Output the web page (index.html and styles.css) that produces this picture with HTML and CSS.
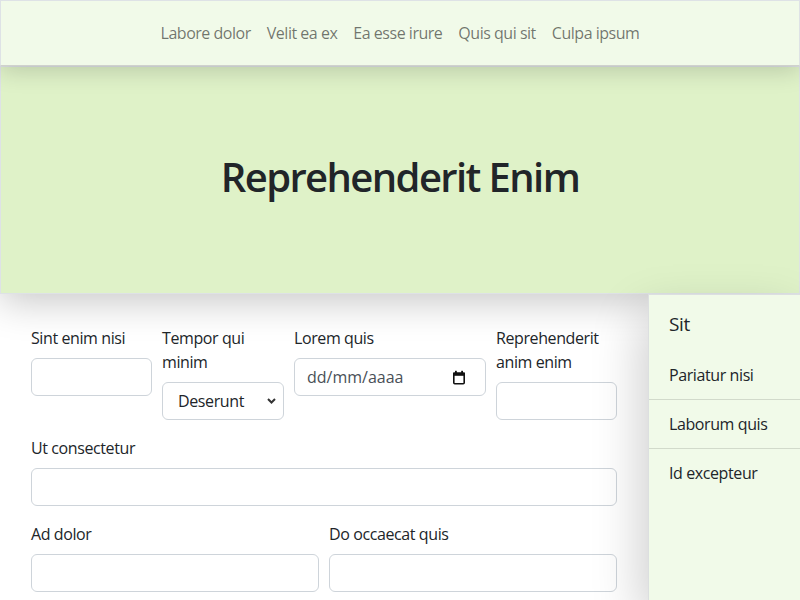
FILE: index.html
```html
<!DOCTYPE html>
<html lang="es">
<head>
<meta charset="utf-8">
<title>Reprehenderit Enim</title>
<link rel="stylesheet" href="styles.css">
</head>
<body>
<nav class="topnav">
  <ul class="nav-links">
    <li><a href="#">Labore dolor</a></li>
    <li><a href="#">Velit ea ex</a></li>
    <li><a href="#">Ea esse irure</a></li>
    <li><a href="#">Quis qui sit</a></li>
    <li><a href="#">Culpa ipsum</a></li>
  </ul>
</nav>
<header class="hero">
  <h1 class="hero-title">Reprehenderit Enim</h1>
</header>
<div class="main">
  <section class="content">
    <form class="form">
      <div class="row row-4">
        <div class="field">
          <label class="label" for="f1">Sint enim nisi</label>
          <input class="control" id="f1" type="text">
        </div>
        <div class="field">
          <label class="label" for="f2">Tempor qui minim</label>
          <select class="control select" id="f2">
            <option>Deserunt</option>
          </select>
        </div>
        <div class="field">
          <label class="label" for="f3">Lorem quis</label>
          <div class="control date-field">
            <input class="date-input" id="f3" type="text" value="dd/mm/aaaa">
            <svg class="cal-icon" width="14" height="15" viewBox="0 0 14 15" aria-hidden="true">
              <rect x="1.8" y="3.3" width="10.4" height="10.4" rx="1" fill="none" stroke="#111" stroke-width="1.6"/>
              <rect x="1" y="2.5" width="12" height="3.3" fill="#111"/>
              <rect x="3" y="0.8" width="1.8" height="3" fill="#111"/>
              <rect x="9.2" y="0.8" width="1.8" height="3" fill="#111"/>
            </svg>
          </div>
        </div>
        <div class="field">
          <label class="label" for="f4">Reprehenderit anim enim</label>
          <input class="control" id="f4" type="text">
        </div>
      </div>
      <div class="row row-1">
        <div class="field">
          <label class="label" for="f5">Ut consectetur</label>
          <input class="control" id="f5" type="text">
        </div>
      </div>
      <div class="row row-2">
        <div class="field">
          <label class="label" for="f6">Ad dolor</label>
          <input class="control" id="f6" type="text">
        </div>
        <div class="field">
          <label class="label" for="f7">Do occaecat quis</label>
          <input class="control" id="f7" type="text">
        </div>
      </div>
    </form>
  </section>
  <aside class="sidebar">
    <h2 class="sidebar-title">Sit</h2>
    <ul class="side-list">
      <li class="side-item">Pariatur nisi</li>
      <li class="side-item">Laborum quis</li>
      <li class="side-item">Id excepteur</li>
    </ul>
  </aside>
</div>
</body>
</html>
```
FILE: styles.css
```css
* { box-sizing: border-box; }

html, body {
  margin: 0;
  padding: 0;
}

body {
  font-family: "Open Sans", "Noto Sans", "DejaVu Sans", sans-serif;
  font-size: 16px;
  line-height: 1.5;
  color: #212529;
  background: #ffffff;
  letter-spacing: -0.025em;
}

/* ---------- top navigation ---------- */
.topnav {
  position: sticky;
  top: 0;
  z-index: 2;
  background: #f1fae9;
  border: 1px solid #dee2e6;
  border-bottom-color: #cfd2cc;
  box-shadow: 0 4px 24px rgba(0, 0, 0, 0.18);
}

.nav-links {
  list-style: none;
  margin: 0;
  padding: 20px 0;
  display: flex;
  justify-content: center;
}

.nav-links a {
  display: block;
  padding: 0 8px;
  line-height: 24px;
  color: rgba(0, 0, 0, 0.55);
  text-decoration: none;
  font-size: 16px;
  letter-spacing: -0.03em;
}

/* ---------- hero ---------- */
.hero {
  background: #dff2c8;
  border: 1px solid #dee2e6;
  padding: 86px 0 92px;
  text-align: center;
  box-shadow: 0 8px 36px rgba(0, 0, 0, 0.22);
}

.hero-title {
  margin: 0;
  font-size: 40px;
  line-height: 48px;
  font-weight: 600;
  color: #212529;
  letter-spacing: -0.04em;
}

/* ---------- main ---------- */
.main {
  display: flex;
  align-items: stretch;
}

.content {
  flex: 1 1 auto;
  min-width: 0;
  padding: 32px 31px 8px;
}

.row {
  display: grid;
  column-gap: 10px;
  align-items: start;
  margin-bottom: 16px;
}

.row:last-child { margin-bottom: 0; }

.row-4 {
  grid-template-columns: minmax(0, 121fr) minmax(0, 122fr) minmax(0, 192fr) minmax(0, 121fr);
}
.row-1 { grid-template-columns: minmax(0, 1fr); }
.row-2 { grid-template-columns: minmax(0, 1fr) minmax(0, 1fr); }

.label {
  display: block;
  line-height: 24px;
  margin-bottom: 8px;
  color: #212529;
}

.control {
  display: block;
  width: 100%;
  height: 38px;
  padding: 6px 12px;
  font: inherit;
  letter-spacing: inherit;
  color: #212529;
  background: #ffffff;
  border: 1px solid #ced4da;
  border-radius: 6px;
  outline: none;
}

.select {
  appearance: none;
  -webkit-appearance: none;
  padding: 6px 36px 6px 12px;
  text-align: center;
  text-align-last: center;
  background-image: url("data:image/svg+xml,%3Csvg xmlns='http://www.w3.org/2000/svg' width='9' height='6' viewBox='0 0 9 6'%3E%3Cpath d='M1 1l3.5 3.5L8 1' fill='none' stroke='%23333' stroke-width='2'/%3E%3C/svg%3E");
  background-repeat: no-repeat;
  background-position: right 7px center;
  background-size: 9px 6px;
}

.date-field {
  display: flex;
  align-items: center;
  padding: 0 19px 0 12px;
}

.date-input {
  flex: 1 1 auto;
  min-width: 0;
  border: 0;
  padding: 0;
  margin: 0;
  font: inherit;
  letter-spacing: 0;
  color: #495057;
  background: transparent;
  outline: none;
}

.cal-icon {
  flex: 0 0 auto;
  display: block;
}

/* ---------- sidebar ---------- */
.sidebar {
  flex: 0 0 152px;
  background: #f1fae9;
  border-left: 1px solid #dcdfe0;
  border-top: 1px solid #dcdfe0;
  box-shadow: -6px 20px 48px rgba(0, 0, 0, 0.2);
}

.sidebar-title {
  margin: 0;
  padding: 15px 20px 13px;
  font-size: 19px;
  line-height: 28px;
  font-weight: 400;
  color: #212529;
}

.side-list {
  list-style: none;
  margin: 0;
  padding: 0;
}

.side-item {
  padding: 12px 20px;
  line-height: 24px;
  font-size: 16px;
  border-bottom: 1px solid rgba(0, 0, 0, 0.125);
}

.side-item:last-child { border-bottom: 0; }
```
